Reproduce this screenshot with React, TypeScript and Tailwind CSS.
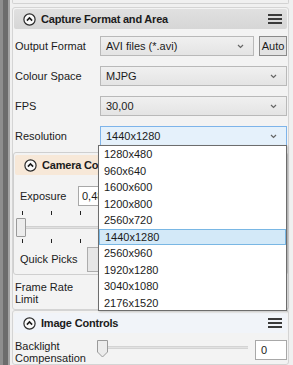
import React from 'react';

const resolutions = [
  '1280x480',
  '960x640',
  '1600x600',
  '1200x800',
  '2560x720',
  '1440x1280',
  '2560x960',
  '1920x1280',
  '3040x1080',
  '2176x1520',
];

// Round collapse button with an up chevron
const CollapseIcon: React.FC = () => (
  <svg width="13" height="13" viewBox="0 0 13 13" className="shrink-0">
    <circle cx="6.5" cy="6.5" r="5.6" fill="#fafafa" stroke="#2a2a2a" strokeWidth="1.2" />
    <path d="M3.9 7.6 L6.5 5 L9.1 7.6" fill="none" stroke="#1a1a1a" strokeWidth="1.6" />
  </svg>
);

const MenuIcon: React.FC = () => (
  <div className="flex flex-col gap-[2px] w-[14px] mr-[5px] shrink-0">
    <div className="h-[2px] bg-[#3a3a3a]" />
    <div className="h-[2px] bg-[#3a3a3a]" />
    <div className="h-[2px] bg-[#3a3a3a]" />
  </div>
);

const Chevron: React.FC = () => (
  <svg width="7" height="5" viewBox="0 0 7 5" className="shrink-0">
    <path d="M1 1 L3.5 3.5 L6 1" fill="none" stroke="#666" strokeWidth="1.2" />
  </svg>
);

interface SectionHeaderProps {
  title: string;
  bg: string;
  clip?: boolean;
}

const SectionHeader: React.FC<SectionHeaderProps> = ({ title, bg, clip }) => (
  <div className={`flex items-center h-[20px] mx-[1px] pl-[9px] gap-[5px] rounded-[2px] ${bg}`}>
    <CollapseIcon />
    <div className="flex-1">
      {/* the open list covers the rest of this title */}
      <span
        className={`block font-bold text-[11px] tracking-[-0.2px] whitespace-nowrap ${
          clip ? 'w-[59px] overflow-hidden' : ''
        }`}
      >
        {title}
      </span>
    </div>
    <MenuIcon />
  </div>
);

interface ComboProps {
  value: string;
  focused?: boolean;
}

const Combo: React.FC<ComboProps> = ({ value, focused }) => (
  <div
    className={`flex-1 h-[20px] flex items-center pl-[5px] pr-[9px] border ${
      focused
        ? 'border-[#7eb4ea] bg-[#e5f1fb]'
        : 'border-[#b9b9b9] bg-gradient-to-b from-[#f0f0f0] to-[#e4e4e4]'
    }`}
  >
    <span className="flex-1">{value}</span>
    <Chevron />
  </div>
);

const Row: React.FC<{ label: string; children: React.ReactNode }> = ({ label, children }) => (
  <div className="flex items-center h-[30px] pr-[1px]">
    <span className="w-[85px] shrink-0">{label}</span>
    <div className="flex flex-1 items-center gap-[5px]">{children}</div>
  </div>
);

const Ticks: React.FC = () => (
  <div className="flex gap-[28px] pl-[8px] h-[4px]">
    <div className="w-[1px] h-[4px] bg-[#222]" />
    <div className="w-[1px] h-[4px] bg-[#222]" />
    <div className="w-[1px] h-[4px] bg-[#222]" />
  </div>
);

export default function App() {
  return (
    <div
      className="w-[293px] h-[365px] overflow-hidden bg-[#f0f0f0] flex text-[11px] text-[#1b1b1b]"
      style={{ fontFamily: '"Liberation Sans", Arial, sans-serif' }}
    >
      {/* splitter strip */}
      <div className="flex shrink-0">
        <div className="w-[3px] bg-[#8e8e8e]" />
        <div className="w-[5px] bg-[#6c6c6c]" />
        <div className="w-[2px] bg-[#a3a3a3]" />
      </div>

      <div className="relative flex-1 flex flex-col ml-[2px] mr-[4px]">
        {/* bottom of the panel above */}
        <div className="h-[4px] border-x border-b border-[#d2d2d2] rounded-b-[2px]" />

        {/* Capture Format and Area */}
        <div className="mt-[3px] border border-[#d4d4d4] rounded-[3px] pt-[1px] bg-[#f3f3f3]">
          <SectionHeader title="Capture Format and Area" bg="bg-gradient-to-b from-[#e0e0e0] to-[#d6d6d6]" />
          <div className="pl-[2px] pt-[2px]">
            <Row label="Output Format">
              <Combo value="AVI files (*.avi)" />
              <div className="w-[28px] h-[20px] flex items-center justify-center border border-[#8a8a8a] bg-[#e3e3e3] text-[11px]">
                Auto
              </div>
            </Row>
            <Row label="Colour Space">
              <Combo value="MJPG" />
            </Row>
            <Row label="FPS">
              <Combo value="30,00" />
            </Row>
            <Row label="Resolution">
              <Combo value="1440x1280" focused />
            </Row>
          </div>

          {/* Camera Controls */}
          <div className="mt-[1px] border border-[#cfcfcf] rounded-[3px] pt-[2px] h-[123px] overflow-hidden">
            <SectionHeader title="Camera Controls" bg="bg-[#f7e8d8]" clip />
            <div className="flex items-center h-[30px] pl-[6px] mt-[6px] w-[84px] overflow-hidden">
              <span className="w-[58px] shrink-0">Exposure</span>
              <div className="w-[40px] shrink-0 h-[20px] border border-[#a8a8a8] bg-white flex items-center pl-[3px]">0,48</div>
            </div>
            <div className="flex flex-col">
              <Ticks />
              <div className="flex items-center h-[24px]">
                <div className="ml-[2px] w-[10px] h-[19px] border border-[#9a9a9a] bg-[#ececec] rounded-[1px]" />
                <div className="flex-1 h-[3px] bg-[#e0e0e0] border-y border-[#d0d0d0]" />
              </div>
              <Ticks />
            </div>
            <div className="flex items-center h-[30px] pl-[6px] mt-[1px]">
              <span className="w-[67px]">Quick Picks</span>
              <div className="w-[40px] h-[25px] border border-[#acacac] bg-[#e6e6e6]" />
            </div>
          </div>

          <div className="flex flex-col pl-[2px] pt-[6px] h-[34px] leading-[12px]">
            <span>Frame Rate</span>
            <span>Limit</span>
          </div>
        </div>

        {/* Image Controls */}
        <div className="border border-[#d4d4d4] rounded-[3px] pt-[2px] bg-[#f3f3f3]">
          <SectionHeader title="Image Controls" bg="bg-[#f1f4f9]" />
          <div className="flex items-start pl-[2px] pt-[7px] leading-[12px]">
            <div className="flex flex-col w-[82px] shrink-0">
              <span>Backlight</span>
              <span>Compensation</span>
            </div>
            <div className="flex-1 flex items-start">
              <svg width="11" height="18" viewBox="0 0 11 18" className="shrink-0">
                <path d="M0.5 0.5 H10.5 V12 L5.5 17 L0.5 12 Z" fill="#ececec" stroke="#9a9a9a" />
              </svg>
              <div className="flex-1 h-[3px] mt-[6px] bg-[#e2e2e2] border-y border-[#d4d4d4] mr-[7px]" />
            </div>
            <div className="w-[32px] h-[20px] mr-[1px] border border-[#a8a8a8] bg-white flex items-center pl-[5px]">0</div>
          </div>
        </div>

        {/* Open Resolution list */}
        <div className="absolute left-[86px] top-[145px] w-[189px] h-[166px] border border-[#6d6d6d] bg-white shadow-[1px_1px_2px_rgba(0,0,0,0.2)]">
          {resolutions.map((r, i) => (
            <div
              key={r}
              className={`h-[16.5px] flex items-center pl-[5px] text-[11px] ${
                i === 5 ? 'bg-[#d3e9f8] border border-[#79b7e4] pl-[4px]' : ''
              }`}
            >
              {r}
            </div>
          ))}
        </div>
      </div>
    </div>
  );
}
